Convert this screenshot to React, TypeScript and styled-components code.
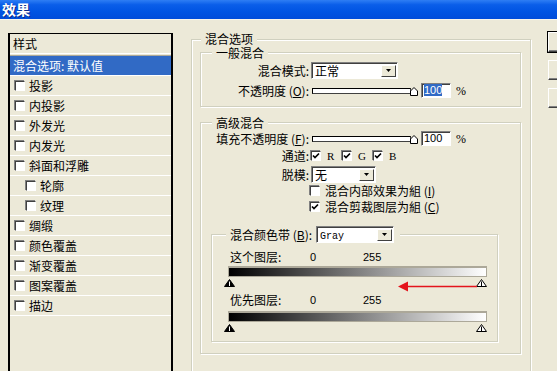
import React from 'react'
import styled, { createGlobalStyle } from 'styled-components'

const GlobalStyle = createGlobalStyle`
  html, body {
    margin: 0;
    padding: 0;
    background: #ece9d8;
  }
  body {
    font-family: "Noto Sans CJK SC", "Liberation Sans", sans-serif;
    font-size: 12px;
    line-height: 14px;
    color: #000;
  }
`

const effects = [
  { name: '投影' },
  { name: '内投影' },
  { name: '外发光' },
  { name: '内发光' },
  { name: '斜面和浮雕' },
  { name: '轮廓', sub: true },
  { name: '纹理', sub: true },
  { name: '绸缎' },
  { name: '颜色覆盖' },
  { name: '渐变覆盖' },
  { name: '图案覆盖' },
  { name: '描边' },
]

const Check = ({ checked }: { checked?: boolean }) => (
  <CheckBox>
    {checked && (
      <svg width="8" height="8" viewBox="0 0 8 8">
        <path d="M1 3.5 L3 5.5 L7 1.5" stroke="#000" strokeWidth="1.7" fill="none" />
      </svg>
    )}
  </CheckBox>
)

const Select = ({ w, children }: { w: number; children: React.ReactNode }) => (
  <SelectBox style={{ width: w }}>
    <SelectText>{children}</SelectText>
    <DropButton>
      <svg width="5" height="3" viewBox="0 0 5 3">
        <path d="M0 0 H5 L2.5 3 Z" fill="#000" />
      </svg>
    </DropButton>
  </SelectBox>
)

const Slider = () => (
  <SliderWrap>
    <Track />
    <Thumb width="8" height="9" viewBox="0 0 8 9">
      <path d="M0.5 8.5 V4 L4 0.5 L7.5 4 V8.5 Z" fill="#fff" stroke="#000" />
    </Thumb>
  </SliderWrap>
)

const Marker = ({ dark }: { dark?: boolean }) => (
  <svg width="11" height="8" viewBox="0 0 11 8">
    <path d="M0.5 7.5 L5.5 0.5 L10.5 7.5 Z" fill={dark ? '#000' : '#fff'} stroke="#000" />
    <path d="M5.5 2.5 V7" stroke={dark ? '#fff' : '#000'} />
  </svg>
)

const App = () => (
  <>
    <GlobalStyle />
    <Window>
      <TitleBar>效果</TitleBar>
      <Body>
        <StyleList>
          <ListHeader>样式</ListHeader>
          <ListDivider />
          <ListItem $selected>混合选项: 默认值</ListItem>
          {effects.map(e => (
            <ListItem key={e.name} $sub={e.sub}>
              <Check />
              <span>{e.name}</span>
            </ListItem>
          ))}
        </StyleList>

        <Outer>
          <Legend $left={9} $top={-7}>混合选项</Legend>

          <Group>
            <Legend $left={11}>一般混合</Legend>
            <Row $mt={9}>
              <Label>混合模式:</Label>
              <Select w={87}>正常</Select>
            </Row>
            <Row $mt={4}>
              <Label>不透明度 (<u>O</u>):</Label>
              <Slider />
              <NumInput><Selected>100</Selected></NumInput>
              <Pct>%</Pct>
            </Row>
          </Group>

          <Group $mt={15} $pb={11}>
            <Legend $left={11}>高级混合</Legend>
            <Row $mt={8}>
              <Label>填充不透明度 (<u>F</u>):</Label>
              <Slider />
              <NumInput>100</NumInput>
              <Pct>%</Pct>
            </Row>
            <Row $mt={3}>
              <Label>通道:</Label>
              <Channel><Check checked /><Letter>R</Letter></Channel>
              <Channel><Check checked /><Letter>G</Letter></Channel>
              <Channel><Check checked /><Letter>B</Letter></Channel>
            </Row>
            <Row $mt={3}>
              <Label>脱模:</Label>
              <Select w={65}>无</Select>
            </Row>
            <CheckRow $mt={2}>
              <Check />
              <span>混合内部效果为組 (<u>I</u>)</span>
            </CheckRow>
            <CheckRow $mt={4}>
              <Check checked />
              <span>混合剪裁图层为組 (<u>C</u>)</span>
            </CheckRow>

            <BandGroup>
              <BandLegend>
                <span>混合颜色带 (<u>B</u>):</span>
                <Select w={78}><Mono>Gray</Mono></Select>
              </BandLegend>
              <LayerRow $mt={15}>
                <LayerLabel>这个图层:</LayerLabel>
                <Num $w={53}>0</Num>
                <Num>255</Num>
              </LayerRow>
              <GradientBar />
              <MarkerRow>
                <Marker dark />
                <Marker />
              </MarkerRow>
              <LayerRow $mt={6}>
                <LayerLabel>优先图层:</LayerLabel>
                <Num $w={53}>0</Num>
                <Num>255</Num>
              </LayerRow>
              <GradientBar $mt={4} />
              <MarkerRow>
                <Marker dark />
                <Marker />
              </MarkerRow>
              <Arrow width="80" height="11" viewBox="0 0 80 11">
                <path d="M0 5.5 L10 0.5 V10.5 Z" fill="#e4141c" />
                <path d="M9 5.5 H79" stroke="#e4141c" strokeWidth="1.5" />
              </Arrow>
            </BandGroup>
          </Group>
        </Outer>

        <Buttons>
          <Button $default aria-label="好" />
          <Button aria-label="取消" />
          <Button aria-label="新建样式" />
        </Buttons>
      </Body>
    </Window>
  </>
)

export default App

const Window = styled.div`
  width: 557px;
  height: 371px;
  overflow: hidden;
  background: #ece9d8;
  display: flex;
  flex-direction: column;
`
const TitleBar = styled.div`
  height: 19px;
  flex-shrink: 0;
  padding-left: 2px;
  border-bottom: 1px solid #f6f4ec;
  background: linear-gradient(#2e7ef4 0%, #0a5ee9 25%, #0054e3 60%, #004cda 100%);
  color: #fff;
  font-size: 14px;
  font-weight: bold;
  line-height: 18px;
  text-shadow: 1px 1px 0 #0a2a8a;
`
const Body = styled.div`
  display: flex;
  align-items: flex-start;
  padding-left: 8px;
`
const StyleList = styled.div`
  width: 165px;
  height: 350px;
  margin-top: 13px;
  box-sizing: border-box;
  flex-shrink: 0;
  border: 1px solid #000;
  border-right-width: 2px;
  border-left-width: 2px;
`
const ListHeader = styled.div`
  height: 19px;
  line-height: 19px;
  padding-left: 3px;
`
const ListDivider = styled.div`
  height: 1px;
  border-top: 1px solid #fff;
  border-bottom: 1px solid #aca899;
`
const ListItem = styled.div<{ $selected?: boolean; $sub?: boolean }>`
  height: 19px;
  display: flex;
  align-items: center;
  gap: 4px;
  padding-left: ${p => (p.$selected ? 3 : p.$sub ? 16 : 5)}px;
  border-bottom: 1px solid #fff;
  background: ${p => (p.$selected ? '#316ac5' : 'transparent')};
  color: ${p => (p.$selected ? '#fff' : '#000')};
`
const CheckBox = styled.span`
  width: 10px;
  height: 10px;
  box-sizing: border-box;
  flex-shrink: 0;
  display: inline-flex;
  align-items: center;
  justify-content: center;
  background: #fff;
  border: 1px solid;
  border-color: #404040 #fff #fff #404040;
  box-shadow: -1px -1px 0 #808080;
`
const Outer = styled.div`
  position: relative;
  width: 340px;
  height: 360px;
  box-sizing: border-box;
  flex-shrink: 0;
  margin: 19px 0 0 18px;
  padding: 12px 9px 0 8px;
  border: 1px solid #d0d0bf;
  box-shadow: inset 1px 1px 0 #fff, 1px 1px 0 #fff;
`
const Group = styled.div<{ $mt?: number; $pb?: number }>`
  position: relative;
  margin-top: ${p => p.$mt ?? 0}px;
  padding-bottom: ${p => p.$pb ?? 8}px;
  border: 1px solid #d0d0bf;
  box-shadow: inset 1px 1px 0 #fff, 1px 1px 0 #fff;
`
const Legend = styled.div<{ $left: number; $top?: number }>`
  position: absolute;
  top: ${p => p.$top ?? -6}px;
  left: ${p => p.$left}px;
  padding: 0 4px;
  line-height: 12px;
  background: #ece9d8;
`
const Row = styled.div<{ $mt: number }>`
  display: flex;
  align-items: center;
  margin-top: ${p => p.$mt}px;
`
const Label = styled.div`
  width: 108px;
  margin-right: 2px;
  text-align: right;
  white-space: nowrap;
`
const SelectBox = styled.div`
  height: 17px;
  box-sizing: border-box;
  display: flex;
  align-items: center;
  background: #fff;
  border: 1px solid;
  border-color: #808080 #fff #fff #808080;
  box-shadow: inset 1px 1px 0 #404040;
`
const SelectText = styled.div`
  flex: 1;
  padding-left: 3px;
  line-height: 15px;
`
const DropButton = styled.div`
  width: 15px;
  height: 12px;
  margin-right: 1px;
  display: flex;
  align-items: center;
  justify-content: center;
  background: #ece9d8;
  border: 1px solid;
  border-color: #fff #404040 #404040 #fff;
  box-sizing: border-box;
`
const SliderWrap = styled.div`
  position: relative;
  width: 106px;
  height: 10px;
  margin-left: 1px;
  display: flex;
  align-items: center;
`
const Track = styled.div`
  width: 99px;
  height: 6px;
  box-sizing: border-box;
  background: #fff;
  border: 1px solid #000;
  border-right-color: #404040;
  border-bottom-color: #404040;
`
const Thumb = styled.svg`
  position: absolute;
  right: 0;
  top: 1px;
`
const NumInput = styled.div`
  width: 30px;
  height: 15px;
  margin-left: 3px;
  box-sizing: border-box;
  padding-left: 2px;
  background: #fff;
  border: 1px solid;
  border-color: #808080 #fff #fff #808080;
  box-shadow: inset 1px 1px 0 #404040;
  font-family: "Liberation Sans", sans-serif;
  font-size: 11px;
  line-height: 13px;
`
const Selected = styled.span`
  background: #316ac5;
  color: #fff;
`
const Pct = styled.span`
  margin-left: 5px;
  font-family: "Liberation Serif", serif;
  font-size: 12px;
`
const Channel = styled.div`
  width: 31px;
  display: flex;
  align-items: center;
  gap: 6px;
  &:first-of-type {
    margin-left: -1px;
  }
`
const Letter = styled.span`
  font-family: "Liberation Serif", serif;
  font-size: 11px;
  line-height: 12px;
`
const CheckRow = styled.div<{ $mt: number }>`
  display: flex;
  align-items: center;
  gap: 5px;
  height: 12px;
  margin-top: ${p => p.$mt}px;
  padding-left: 109px;
`
const BandGroup = styled.div`
  position: relative;
  margin: 21px 22px 0 10px;
  padding: 0 0 9px 16px;
  border: 1px solid #d0d0bf;
  box-shadow: inset 1px 1px 0 #fff, 1px 1px 0 #fff;
`
const BandLegend = styled.div`
  position: absolute;
  top: -9px;
  left: 14px;
  padding: 0 6px 0 4px;
  display: flex;
  align-items: center;
  gap: 4px;
  background: #ece9d8;
`
const Mono = styled.span`
  font-family: "Liberation Mono", monospace;
  font-size: 10px;
`
const LayerRow = styled.div<{ $mt: number }>`
  display: flex;
  align-items: center;
  height: 14px;
  padding-left: 2px;
  margin-top: ${p => p.$mt}px;
`
const LayerLabel = styled.div`
  width: 80px;
`
const Num = styled.div<{ $w?: number }>`
  width: ${p => (p.$w ? `${p.$w}px` : 'auto')};
  font-family: "Liberation Sans", sans-serif;
  font-size: 11px;
`
const GradientBar = styled.div<{ $mt?: number }>`
  width: 259px;
  height: 11px;
  box-sizing: border-box;
  margin-top: ${p => p.$mt ?? 2}px;
  border: 1px solid #aca899;
  border-top-width: 2px;
  background: linear-gradient(to right, #000, #fff);
`
const MarkerRow = styled.div`
  width: 263px;
  margin: 2px 0 0 -4px;
  display: flex;
  justify-content: space-between;
  line-height: 0;
`
const Arrow = styled.svg`
  position: absolute;
  left: 186px;
  top: 46px;
`
const Buttons = styled.div`
  display: flex;
  flex-direction: column;
  gap: 8px;
  margin: 12px 0 0 17px;
  flex-shrink: 0;
`
const Button = styled.button<{ $default?: boolean }>`
  width: 75px;
  height: 20px;
  padding: 0;
  background: #ece9d8;
  border: 1px solid;
  border-color: #fff #404040 #404040 #fff;
  box-shadow: inset -1px -1px 0 #808080;
  outline: ${p => (p.$default ? '1px solid #000' : 'none')};
`
